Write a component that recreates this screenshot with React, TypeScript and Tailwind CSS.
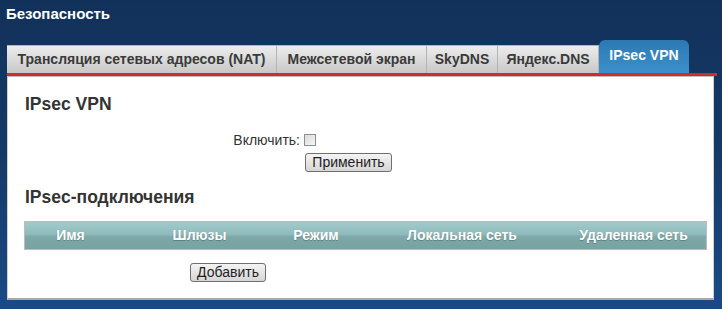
const tabs = [
  { label: "Трансляция сетевых адресов (NAT)", w: "w-[270px]" },
  { label: "Межсетевой экран", w: "w-[150px]" },
  { label: "SkyDNS", w: "w-[71px]" },
  { label: "Яндекс.DNS", w: "w-[101px]" },
];

const columns = ["Имя", "Шлюзы", "Режим", "Локальная сеть", "Удаленная сеть"];

function GrayButton({ children, className }: { children: React.ReactNode; className?: string }) {
  return (
    <button
      type="button"
      className={
        "h-[19px] rounded-[3px] border border-[#707070] bg-gradient-to-b from-[#f4f4f4] to-[#d6d6d6] text-[14px] leading-[17px] text-[#222] " +
        (className ?? "")
      }
    >
      {children}
    </button>
  );
}

export default function App() {
  return (
    <div className="h-[309px] w-[722px] overflow-hidden bg-gradient-to-b from-[#12315a] via-[#143a68] to-[#1a4a86] pl-[7px] pr-[5px] font-['Liberation_Sans',Arial,sans-serif]">
      <h1 className="-ml-[1px] pt-[5px] text-[15px] font-bold leading-[17px] text-white">Безопасность</h1>

      {/* tabs */}
      <div className="mt-[18px] flex items-end">
        {tabs.map((t) => (
          <div
            key={t.label}
            className={
              t.w +
              " flex h-[28px] items-center justify-center border-r border-t border-[#b4b4b4] bg-gradient-to-b from-[#ededed] to-[#c8c8c8] text-[14px] font-bold text-[#3a3a3a]"
            }
          >
            {t.label}
          </div>
        ))}
        <div className="flex h-[33px] w-[90px] items-center justify-center rounded-t-[6px] bg-gradient-to-b from-[#2c79b2] to-[#3b90cd] pb-[2px] text-[14px] font-bold text-white">
          IPsec VPN
        </div>
      </div>
      <div className="h-[3px] bg-[#d22b2b]" />

      {/* panel */}
      <div className="mr-[3px] h-[224px] border border-x-[#cfcfcf] border-t-[#bdbdbd] border-b-2 border-b-[#a9a9a9] bg-white text-[#333]">
        <h2 className="ml-[17px] mt-[17px] text-[17.5px] font-bold leading-[20px]">IPsec VPN</h2>

        <div className="mt-[18px] flex items-center">
          <span className="w-[292px] text-right text-[14px] leading-[16px]">Включить:</span>
          <input
            type="checkbox"
            className="ml-[4px] h-[12px] w-[12px] appearance-none border border-[#8f8f8f] bg-gradient-to-br from-[#dcdcdc] to-[#f4f4f4]"
          />
        </div>
        <div className="ml-[297px] mt-[2px]">
          <GrayButton className="w-[87px]">Применить</GrayButton>
        </div>

        <h2 className="ml-[17px] mt-[13px] text-[17.5px] font-bold leading-[20px]">IPsec-подключения</h2>

        <div className="ml-[16px] mr-[6px] mt-[14px] grid h-[29px] grid-cols-[91px_167px_66px_226px_1fr] items-center border border-[#bcbcbc] bg-[linear-gradient(to_bottom,#a2cacb_0%,#8fbbbc_45%,#7ea8a8_55%,#79a3a3_100%)] text-[14px] font-bold text-white [text-shadow:0_1px_1px_rgba(0,0,0,0.25)]">
          {columns.map((c, i) => (
            <div key={c} className={"text-center" + (i === 4 ? " pr-[14px]" : "")}>
              {c}
            </div>
          ))}
        </div>

        <div className="ml-[182px] mt-[10px]">
          <GrayButton className="w-[76px]">Добавить</GrayButton>
        </div>
      </div>
    </div>
  );
}
